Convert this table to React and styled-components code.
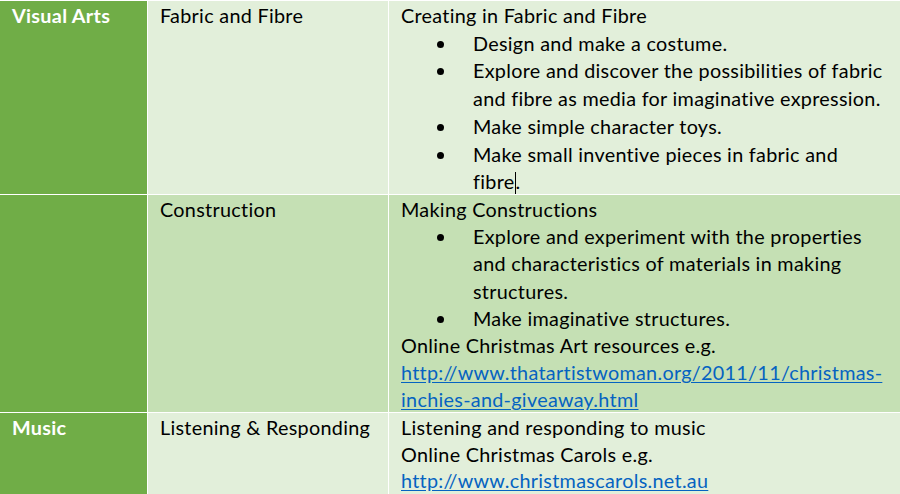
import React from 'react';
import styled, { createGlobalStyle } from 'styled-components';

const Global = createGlobalStyle`
    html, body {
        margin: 0;
        padding: 0;
        background: #ffffff;
        overflow: hidden;
    }
    body {
        font-family: 'Lato', 'Open Sans', sans-serif;
    }
`;

const Table = styled.div`
    display: grid;
    grid-template-columns: 147px 240px 1fr;
    grid-template-rows: 193px 217px 90px;
    gap: 1px;
    padding-top: 1px;
    width: 900px;
    height: 494px;
    background: #ffffff;
    font-size: 19.8px;
    letter-spacing: 0.3px;
    color: #000000;
`;

const Cell = styled.div`
    background: ${props => props.tone === 'dark' ? '#70ad47' : props.tone === 'mid' ? '#c5e0b4' : '#e2efda'};
    line-height: ${props => props.lh || 27.6}px;
    padding: 1px 12px 0 12px;
    box-sizing: border-box;
    overflow: hidden;
`;

const Heading = styled.div`
    color: #ffffff;
    font-weight: 700;
`;

const Bullets = styled.ul`
    list-style: none;
    margin: 0;
    padding: 0 0 0 72px;
`;

const Bullet = styled.li`
    position: relative;
    &::before {
        content: '';
        position: absolute;
        left: -36px;
        top: 11px;
        width: 7px;
        height: 7px;
        border-radius: 50%;
        background: #000000;
    }
`;

const NoWrap = styled.span`
    white-space: nowrap;
`;

const Link = styled.a`
    color: #0563c1;
    text-decoration: underline;
    text-underline-offset: 2px;
`;

const Caret = styled.span`
    display: inline-block;
    width: 1px;
    height: 22px;
    background: #000000;
    vertical-align: -5px;
`;

const App = () => {
    return (
        <>
            <Global />
            <Table>
                <Cell tone="dark" lh={27.7}><Heading>Visual Arts</Heading></Cell>
                <Cell lh={27.7}>Fabric and Fibre</Cell>
                <Cell lh={27.7}>
                    Creating in Fabric and Fibre
                    <Bullets>
                        <Bullet>Design and make a costume.</Bullet>
                        <Bullet>Explore and discover the possibilities of fabric and fibre as media for imaginative expression.</Bullet>
                        <Bullet>Make simple character toys.</Bullet>
                        <Bullet>Make small inventive pieces in fabric and <NoWrap>fibre<Caret />.</NoWrap></Bullet>
                    </Bullets>
                </Cell>

                <Cell tone="dark" lh={27.2} />
                <Cell tone="mid" lh={27.2}>Construction</Cell>
                <Cell tone="mid" lh={27.2}>
                    Making Constructions
                    <Bullets>
                        <Bullet>Explore and experiment with the properties and characteristics of materials in making structures.</Bullet>
                        <Bullet>Make imaginative structures.</Bullet>
                    </Bullets>
                    Online Christmas Art resources e.g.<br />
                    <Link href="#">http://www.thatartistwoman.org/2011/11/christmas-inchies-and-giveaway.html</Link>
                </Cell>

                <Cell tone="dark" lh={26.6}><Heading>Music</Heading></Cell>
                <Cell lh={26.6}>Listening &amp; Responding</Cell>
                <Cell lh={26.6}>
                    Listening and responding to music<br />
                    Online Christmas Carols e.g.<br />
                    <Link href="#">http://www.christmascarols.net.au</Link>
                </Cell>
            </Table>
        </>
    );
};

export default App;
